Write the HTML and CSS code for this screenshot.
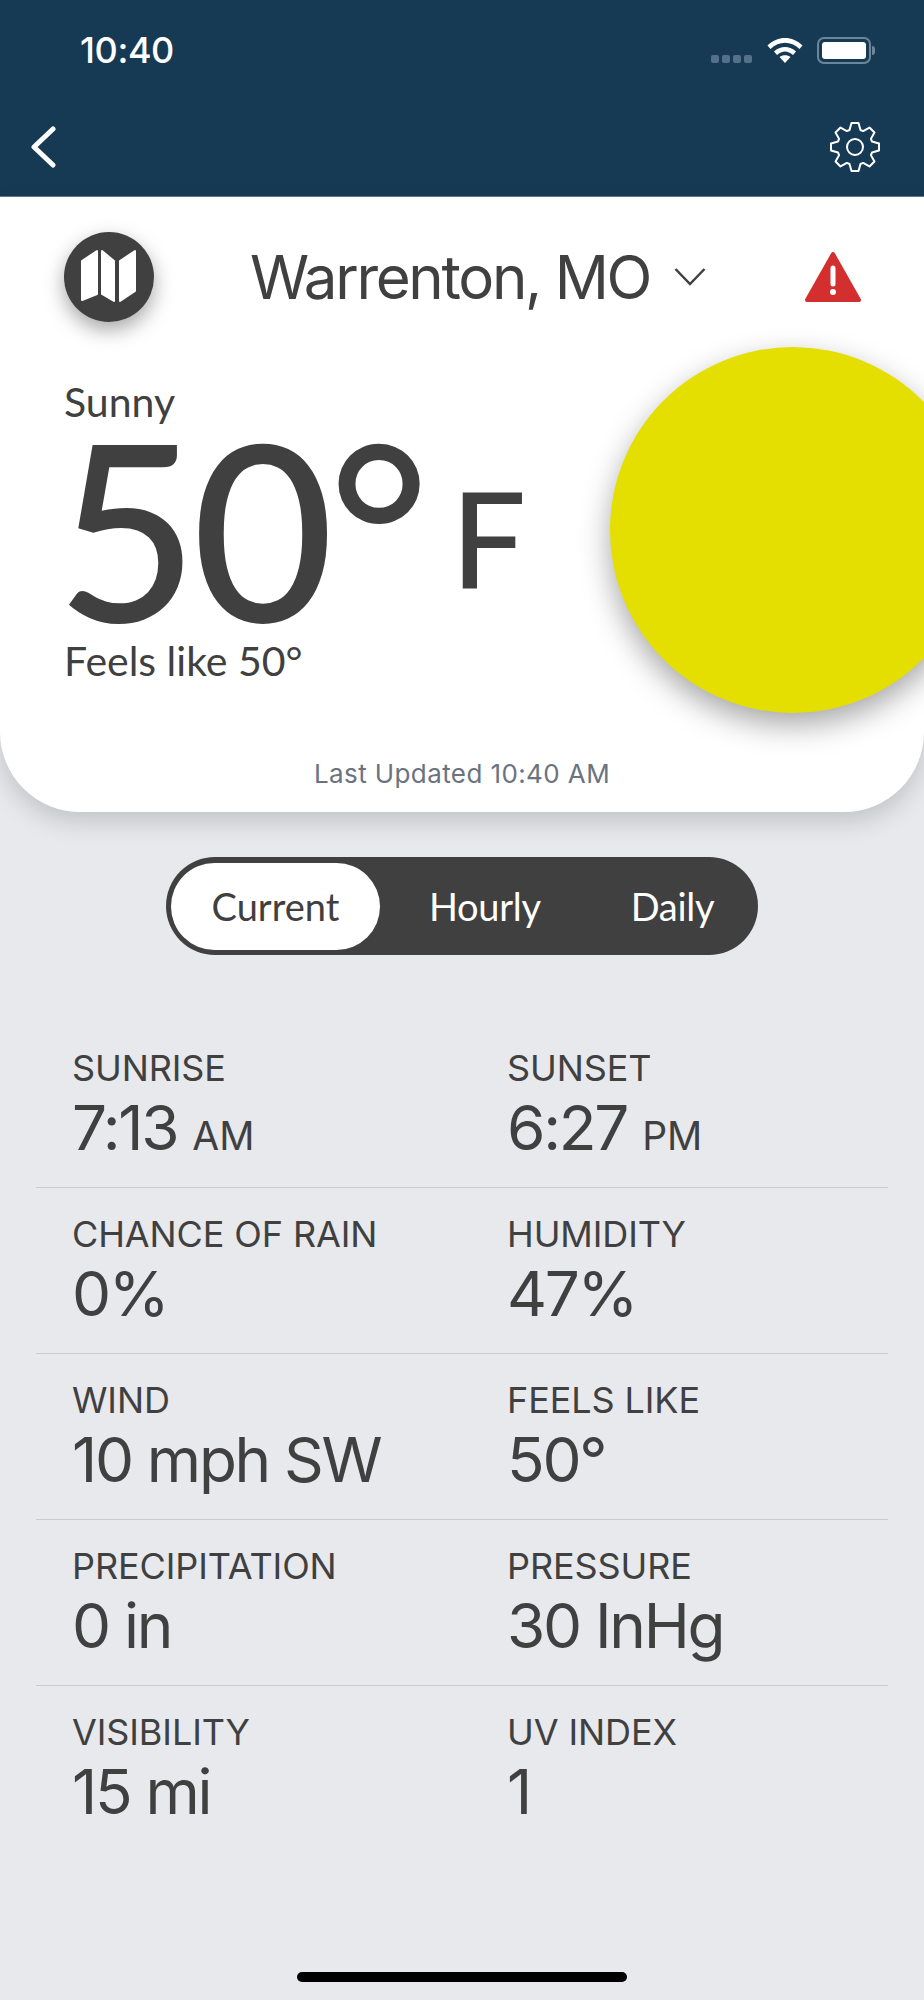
FILE: index.html
```html
<!DOCTYPE html>
<html lang="en">
<head>
    <meta charset="UTF-8">
    <meta name="viewport" content="width=device-width, initial-scale=1.0">
    <title>Warrenton, MO Weather</title>
    <link rel="stylesheet" href="styles.css">
</head>
<body>
    <div class="app">
        <div class="topbar">
            <div class="status">
                <span class="clock">10:40</span>
                <div class="status-icons">
                    <div class="signal"><i></i><i></i><i></i><i></i></div>
                    <svg class="wifi" width="36" height="26" viewBox="0 0 36 26">
                        <path d="M0.5 8.5C10.5 -1.5 25.5 -1.5 35.5 8.5L32.5 12C24 3.5 12 3.5 3.5 12Z" fill="#fff"/>
                        <path d="M7 14.5C13 8.5 23 8.5 29 14.5L26 18C21 13.3 15 13.3 10 18Z" fill="#fff"/>
                        <path d="M12.5 20C15.5 17.5 20.5 17.5 23.5 20L18 26Z" fill="#fff"/>
                    </svg>
                    <div class="battery"><div class="battery-fill"></div></div>
                    <div class="battery-tip"></div>
                </div>
            </div>
            <div class="nav">
                <svg class="back" width="26" height="42" viewBox="0 0 26 42">
                    <path d="M23 3L4 21L23 39" fill="none" stroke="#fff" stroke-width="5" stroke-linecap="round" stroke-linejoin="round"/>
                </svg>
                <svg class="gear" width="50" height="50" viewBox="-25 -25 50 50">
                    <polygon fill="none" stroke="#fff" stroke-width="2" stroke-linejoin="round" points="-5.5,-17 -3.5,-24 3.5,-24 5.5,-17 8.13,-15.91 14.5,-19.45 19.45,-14.5 15.91,-8.13 17,-5.5 24,-3.5 24,3.5 17,5.5 15.91,8.13 19.45,14.5 14.5,19.45 8.13,15.91 5.5,17 3.5,24 -3.5,24 -5.5,17 -8.13,15.91 -14.5,19.45 -19.45,14.5 -15.91,8.13 -17,5.5 -24,3.5 -24,-3.5 -17,-5.5 -15.91,-8.13 -19.45,-14.5 -14.5,-19.45 -8.13,-15.91"/>
                    <circle r="8" fill="none" stroke="#fff" stroke-width="2"/>
                </svg>
            </div>
        </div>

        <div class="card">
            <div class="card-head">
                <div class="map-btn">
                    <svg width="90" height="90" viewBox="0 0 90 90">
                        <g fill="#fff" stroke="#fff" stroke-width="2" stroke-linejoin="round">
                            <polygon points="18,29 33,19 33,62 18,68"/>
                            <polygon points="38,19 50,29 50,69 38,62"/>
                            <polygon points="56,29 71,19 71,59 56,69"/>
                        </g>
                    </svg>
                </div>
                <div class="place">
                    <span>Warrenton, MO</span>
                    <svg width="32" height="20" viewBox="0 0 32 20">
                        <path d="M1.5 2L16 17L30.5 2" fill="none" stroke="#404040" stroke-width="2.5"/>
                    </svg>
                </div>
                <svg class="alert" width="58" height="52" viewBox="0 0 58 52">
                    <path d="M29 3L55 49H3Z" fill="#d32f2f" stroke="#d32f2f" stroke-width="4" stroke-linejoin="round"/>
                    <path d="M29 17V33" stroke="#fff" stroke-width="5" stroke-linecap="round"/>
                    <circle cx="29" cy="41" r="3" fill="#fff"/>
                </svg>
            </div>
            <div class="now">
                <div class="cond">Sunny</div>
                <div class="temp"><span class="deg">50°</span><span class="unit">F</span></div>
                <div class="feels">Feels like 50°</div>
            </div>
            <div class="updated">Last Updated 10:40 AM</div>
            <div class="sun"></div>
        </div>

        <div class="tabs">
            <div class="tab active">Current</div>
            <div class="tab hourly">Hourly</div>
            <div class="tab daily">Daily</div>
        </div>

        <div class="stats">
            <div class="row">
                <div class="stat"><div class="label">SUNRISE</div><div class="value">7:13 <small>AM</small></div></div>
                <div class="stat"><div class="label">SUNSET</div><div class="value">6:27 <small>PM</small></div></div>
            </div>
            <div class="row">
                <div class="stat"><div class="label">CHANCE OF RAIN</div><div class="value">0%</div></div>
                <div class="stat"><div class="label">HUMIDITY</div><div class="value">47%</div></div>
            </div>
            <div class="row">
                <div class="stat"><div class="label">WIND</div><div class="value">10 mph SW</div></div>
                <div class="stat"><div class="label">FEELS LIKE</div><div class="value">50°</div></div>
            </div>
            <div class="row">
                <div class="stat"><div class="label">PRECIPITATION</div><div class="value">0 in</div></div>
                <div class="stat"><div class="label">PRESSURE</div><div class="value">30 InHg</div></div>
            </div>
            <div class="row">
                <div class="stat"><div class="label">VISIBILITY</div><div class="value">15 mi</div></div>
                <div class="stat"><div class="label">UV INDEX</div><div class="value">1</div></div>
            </div>
        </div>

        <div class="home-bar"></div>
    </div>
</body>
</html>
```

FILE: styles.css
```css
body {
    margin: 0;
    padding: 0;
    background-color: #e8e9ed;
    font-family: "Inter", "Liberation Sans", sans-serif;
    color: #404040;
}

.app {
    width: 924px;
    height: 2000px;
    overflow: hidden;
    position: relative;
}

/* top bar */
.topbar {
    height: 197px;
    box-sizing: border-box;
    background-color: #173a54;
    border-bottom: 1px solid #5d7c93;
}

.status {
    display: flex;
    justify-content: space-between;
    align-items: center;
    height: 100px;
    padding: 0 49px 0 80px;
}

.clock {
    color: #fff;
    font-size: 36px;
    font-weight: 500;
    letter-spacing: -0.4px;
}

.status-icons {
    display: flex;
    align-items: center;
}

.signal {
    display: flex;
    gap: 3px;
    margin-top: 18px;
    margin-right: 15px;
}

.signal i {
    width: 8px;
    height: 8px;
    border-radius: 2px;
    background-color: #54708a;
}

.wifi {
    margin-right: 14px;
}

.battery {
    width: 54px;
    height: 27px;
    box-sizing: border-box;
    border: 2px solid #6c8599;
    border-radius: 7px;
    padding: 3px;
}

.battery-fill {
    height: 100%;
    background-color: #fff;
    border-radius: 3px;
}

.battery-tip {
    width: 3px;
    height: 9px;
    margin-left: 1px;
    background-color: #6c8599;
    border-radius: 0 3px 3px 0;
}

.nav {
    display: flex;
    justify-content: space-between;
    align-items: center;
    height: 50px;
    margin-top: 22px;
    padding: 0 44px 0 30px;
}

/* card */
.card {
    position: relative;
    height: 615px;
    background-color: #fff;
    border-radius: 0 0 80px 80px;
    box-shadow: 0 10px 24px rgba(0, 0, 0, 0.16);
    overflow: hidden;
}

.card-head {
    display: flex;
    align-items: center;
    padding: 35px 0 0 64px;
}

.map-btn {
    width: 90px;
    height: 90px;
    border-radius: 50%;
    background-color: #404040;
    box-shadow: 0 8px 20px rgba(0, 0, 0, 0.35);
}

.place {
    display: flex;
    align-items: center;
    width: 650px;
    padding-left: 96px;
    box-sizing: border-box;
    font-size: 60px;
    letter-spacing: -2.3px;
    white-space: nowrap;
}

.place svg {
    margin-left: 24px;
}

.now {
    padding: 57px 0 0 64px;
    font-family: "Lato", sans-serif;
}

.cond,
.feels {
    font-size: 41px;
    line-height: 46px;
}

.temp {
    display: flex;
    align-items: flex-start;
    height: 213px;
}

.deg {
    font-size: 245px;
    line-height: 204px;
    font-weight: 500;
    letter-spacing: -6px;
    margin-left: -8px;
}

.unit {
    font-size: 133px;
    line-height: 133px;
    font-weight: 500;
    margin-top: 46px;
    margin-left: 27px;
}

.updated {
    position: absolute;
    left: 0;
    right: 0;
    bottom: 23px;
    text-align: center;
    font-size: 26px;
    color: #6b7280;
    letter-spacing: 0.4px;
}

.sun {
    position: absolute;
    left: 610px;
    top: 150px;
    width: 366px;
    height: 366px;
    border-radius: 50%;
    background-color: #e4df00;
    box-shadow: 0 12px 30px rgba(0, 0, 0, 0.35);
}

/* tabs */
.tabs {
    display: flex;
    align-items: center;
    box-sizing: border-box;
    width: 592px;
    height: 98px;
    margin: 45px 0 0 166px;
    padding: 5px;
    border-radius: 49px;
    background-color: #404040;
    font-family: "Lato", sans-serif;
    font-size: 38px;
    color: #fff;
}

.tab {
    line-height: 87px;
}

.tab.active {
    width: 209px;
    text-align: center;
    background-color: #fff;
    color: #404040;
    border-radius: 44px;
}

.tab.hourly {
    margin-left: 49px;
    letter-spacing: -0.3px;
}

.tab.daily {
    margin-left: 90px;
    letter-spacing: -0.3px;
}

/* stats */
.stats {
    margin: 67px 36px 0;
}

.row {
    display: grid;
    grid-template-columns: 435px 1fr;
    height: 166px;
    box-sizing: border-box;
    padding: 21px 0 0 36px;
    border-bottom: 1px solid #c9cbd1;
}

.row:last-child {
    border-bottom: none;
}

.label {
    font-size: 36px;
    line-height: 50px;
    letter-spacing: -0.1px;
}

.value {
    font-size: 62px;
    line-height: 70px;
    letter-spacing: -2.3px;
}

.value small {
    font-size: 39px;
    letter-spacing: 0;
}

.home-bar {
    position: absolute;
    left: 297px;
    bottom: 18px;
    width: 330px;
    height: 10px;
    border-radius: 5px;
    background-color: #000;
}
```
